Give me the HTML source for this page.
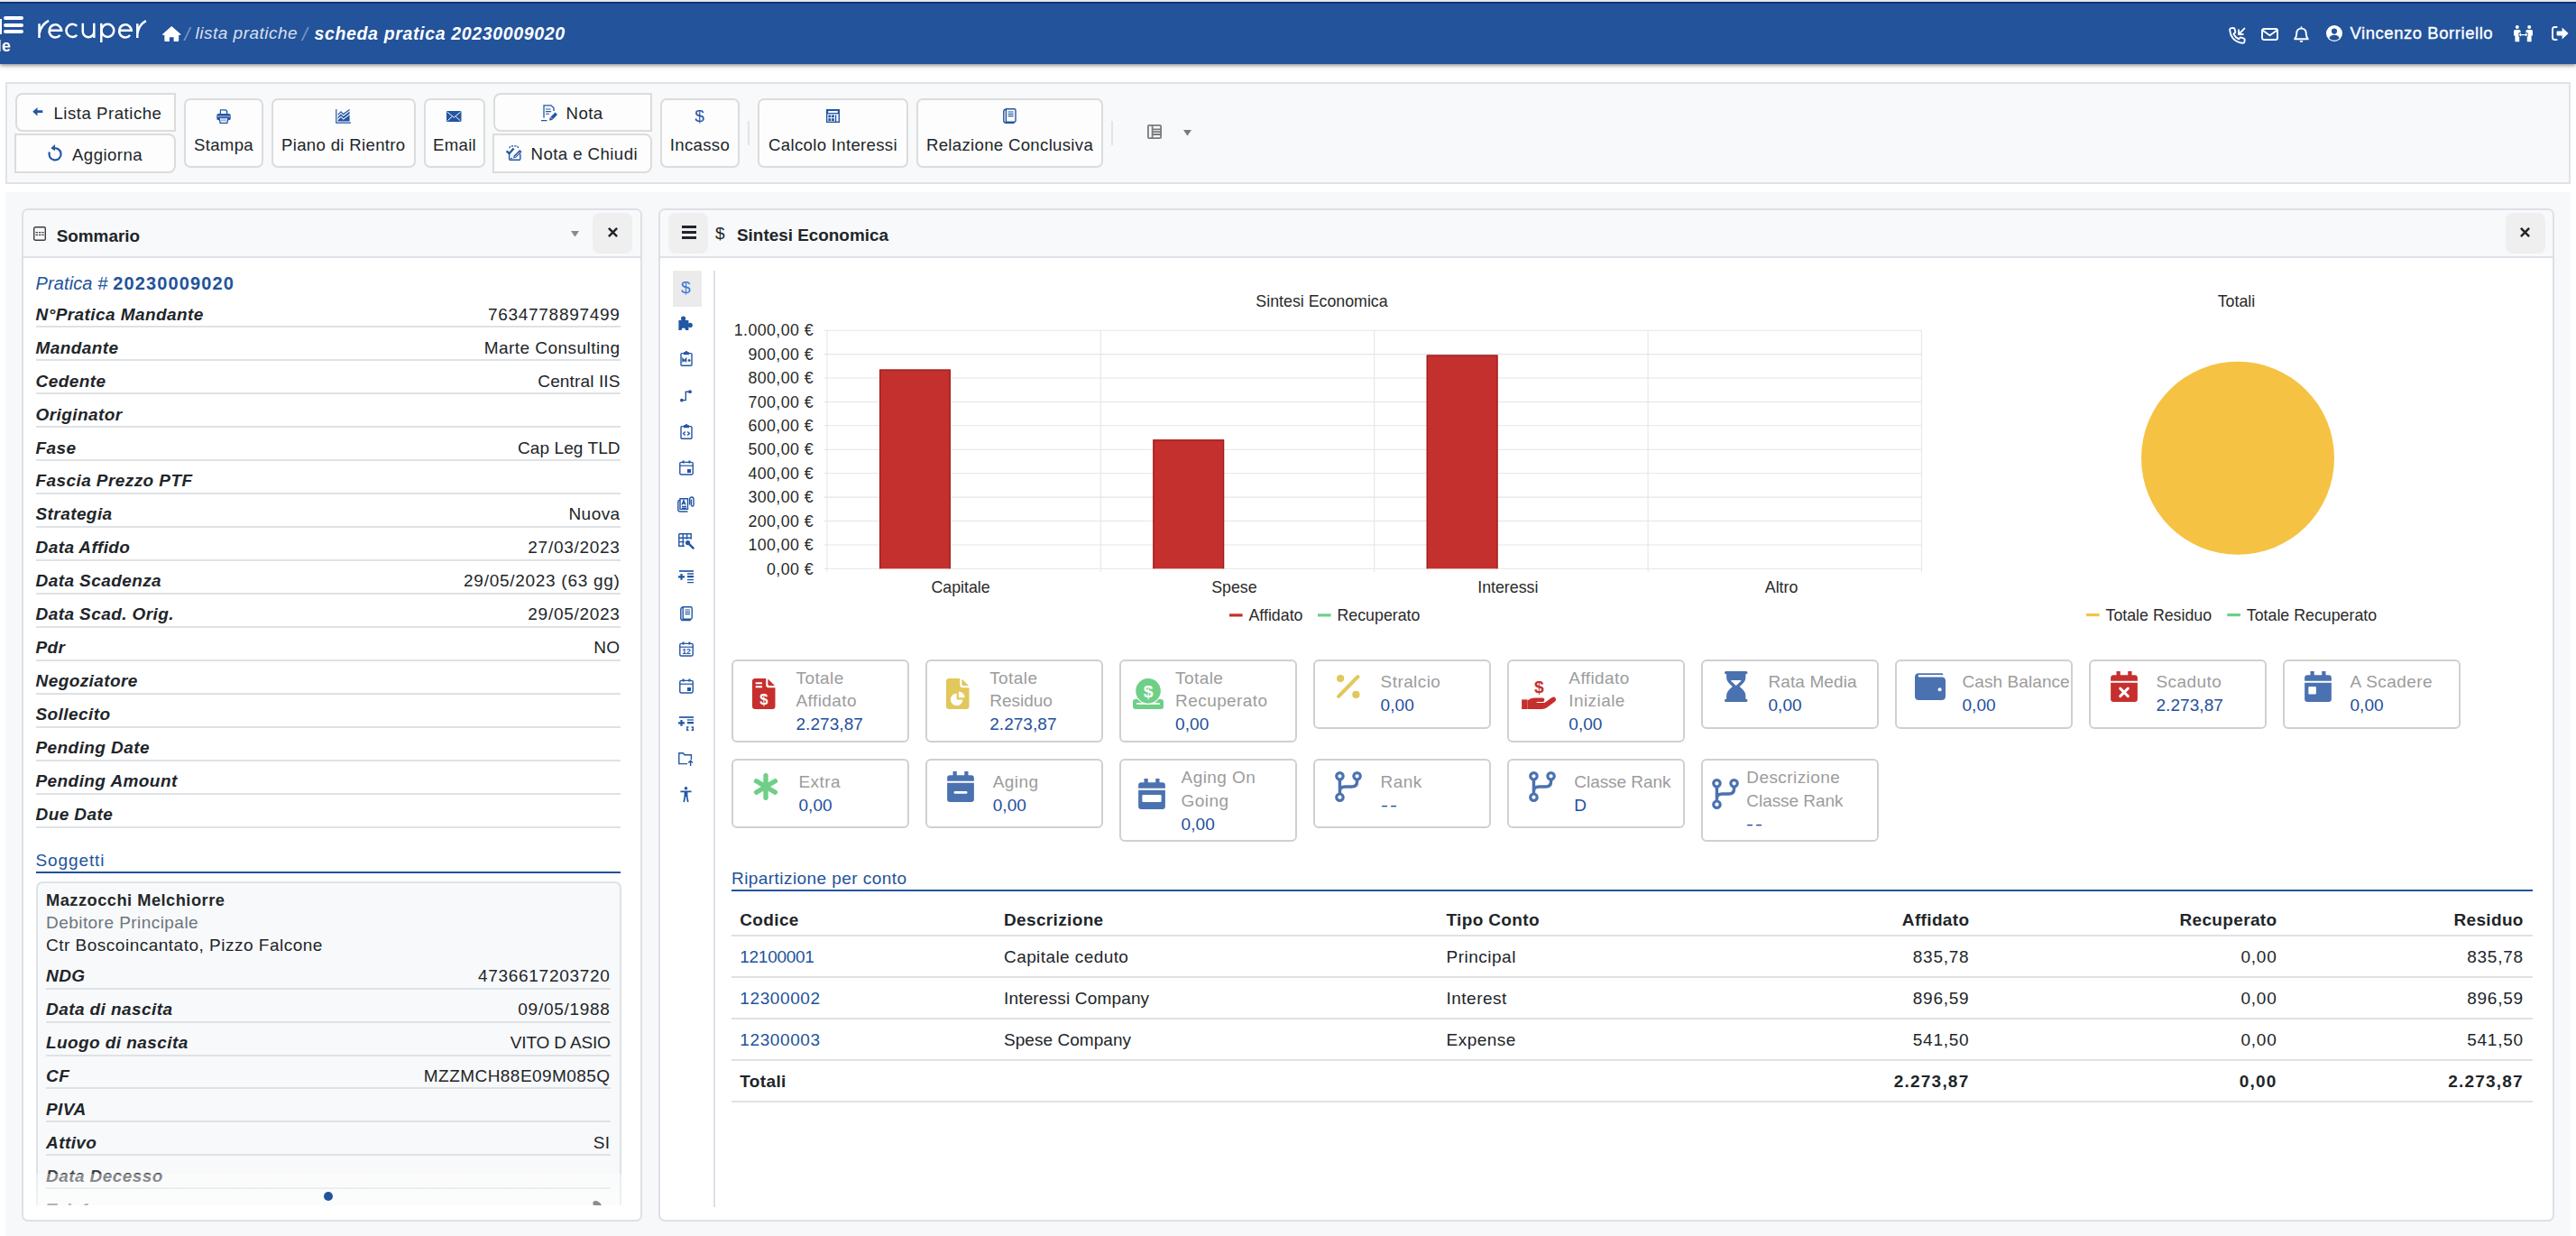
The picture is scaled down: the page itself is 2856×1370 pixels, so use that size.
<!DOCTYPE html>
<html lang="it">
<head>
<meta charset="utf-8">
<title>scheda pratica 20230009020</title>
<style>
*{box-sizing:border-box;margin:0;padding:0}
html,body{width:2856px;height:1370px;overflow:hidden;background:#fff}
body{font-family:"Liberation Sans",sans-serif;font-size:19px;color:#212529;position:relative}
.abs{position:absolute}
svg{display:block;overflow:visible}
/* ---------- top bar ---------- */
#topstrip{position:absolute;left:0;top:0;width:2856px;height:2px;background:#e9e8e6;z-index:5}
#hdr{position:absolute;left:0;top:2px;width:2856px;height:69px;background:#22539b;box-shadow:0 1px 5px rgba(0,0,0,.55);z-index:4}
#hdr:before{content:"";position:absolute;left:0;top:0;width:100%;height:2px;background:linear-gradient(#00246e,#123f8a)}
#hdr .t{position:absolute;color:#fff;white-space:nowrap}
/* ---------- toolbar ---------- */
#tb{position:absolute;left:6px;top:91px;width:2844px;height:113px;background:#f8f9fa;border:2px solid #dfe2e7}
.btn{position:absolute;background:#fdfdfd;border:2px solid #dcdcdc;border-radius:7px;white-space:nowrap;font-size:18.6px;letter-spacing:.32px;color:#212529}
.btn .l{position:absolute;left:0;width:100%;text-align:center}
.sep{position:absolute;width:2px;background:#e2e4e8}
/* ---------- page bg ---------- */
#pg{position:absolute;left:6px;top:213px;width:2844px;height:1157px;background:#f7f8fa}
.panel{position:absolute;background:#fff;border:2px solid #dde0e6;border-radius:7px;overflow:hidden}
.phead{position:absolute;left:0;top:0;right:0;height:53px;background:#f8f9fa;border-bottom:2px solid #dde0e6}
.ptitle{position:absolute;font-weight:bold;font-size:18.9px;letter-spacing:0px;white-space:nowrap;color:#212529}
.sqbtn{position:absolute;width:44px;height:45px;background:#efefef;border-radius:8px}

/* ---------- sommario ---------- */
.row{position:absolute;left:39.5px;width:648.5px;height:2px;background:#dee2e6}
.lb{position:absolute;left:39.5px;font-weight:bold;font-style:italic;font-size:19px;letter-spacing:.42px;white-space:nowrap;line-height:22px}
.vl{position:absolute;right:2168.4px;font-size:19px;letter-spacing:.45px;white-space:nowrap;line-height:22px;text-align:right}
.vl.n{letter-spacing:.72px}
.stitle{position:absolute;color:#22539b;font-size:19px;letter-spacing:.55px;white-space:nowrap;line-height:22px}
.sline{position:absolute;height:2px;background:#22539b}
#subj{position:absolute;left:40px;top:977px;width:648.5px;height:359px;background:#f8f9fa;border:2px solid #dee2e6;border-bottom:0;border-radius:7px 7px 0 0;overflow:hidden}
#subj .row{left:9px;width:626px}
#subj .lb{left:9px}
#subj .vl{right:9.9px}

/* ---------- cards ---------- */
.card{position:absolute;width:197px;background:#fff;border:2px solid #d0d0d0;border-radius:6px}
.card .t{position:absolute;font-size:19px;letter-spacing:.42px;line-height:25.8px;white-space:nowrap;color:#9c9c9c}
.card .t b{font-weight:normal;color:#1f4fa0;letter-spacing:.05px;position:relative;top:.3px}
.card svg{position:absolute}
.card.r2 .t{margin-top:.55px}
.card.r2 svg{margin-top:.5px}

/* ---------- table ---------- */
.tr{position:absolute;left:811px;width:1997px;height:2px;background:#dee2e6}
.td{position:absolute;font-size:19px;letter-spacing:.5px;line-height:22px;white-space:nowrap}
.td.r{text-align:right;letter-spacing:.75px}
.td.h{font-weight:bold;letter-spacing:.35px}
.td.r.h{letter-spacing:.35px}
.td.a{color:#22539b;letter-spacing:.85px}
</style>
</head>
<body>
<div id="topstrip"></div>
<div id="hdr">
<!-- hamburger + clipped items -->
<div class="abs" style="left:0;top:19px;width:2px;height:17px;background:#fff"></div>
<div class="abs" style="left:4px;top:16px;width:22px;height:4px;border-radius:2px;background:#fff"></div>
<div class="abs" style="left:4px;top:23.6px;width:22px;height:4.3px;border-radius:2px;background:#fff"></div>
<div class="abs" style="left:4px;top:31px;width:22px;height:4.3px;border-radius:2px;background:#fff"></div>
<div class="t" style="left:-3.2px;top:39px;font-size:17.5px;font-weight:bold;line-height:20px;letter-spacing:.4px">le</div>
<!-- logo -->
<svg class="abs" style="left:0;top:-2px" width="180" height="60" viewBox="0 0 180 60" fill="none" stroke="#fff" stroke-width="2.5">
<path d="M43.5 26.2V41.9M43.6 37Q45.5 27.5 54 22.9"/>
<path d="M54.6 33.8H68.2A6.85 7.1 0 1 0 66.6 39"/>
<path d="M85.3 28.9A6.9 7.1 0 1 0 85.3 38.8"/>
<path d="M91.8 25.8V35A6.25 6.2 0 0 0 104.3 35V25.8M104.3 25.8V41.9"/>
<path d="M112.3 25.8V47"/><ellipse cx="119.4" cy="33.8" rx="6.9" ry="7.1"/>
<path d="M132.2 33.8H145.8A6.85 7.1 0 1 0 144.2 39"/>
<path d="M152.3 26.2V41.9M152.4 37Q154 27.5 161.8 23.1"/>
</svg>
<!-- breadcrumb -->
<svg class="abs" style="left:180px;top:25.6px" width="20.5" height="19" viewBox="0 0 576 512"><path fill="#fff" d="M288 14 L8 262 Q-4 276 8 290 Q14 296 24 296 H66 V470 Q66 494 90 494 H222 V372 Q222 360 234 360 H342 Q354 360 354 372 V494 H486 Q510 494 510 470 V296 H552 Q562 296 568 290 Q580 276 568 262 Z"/></svg>
<div class="t" style="left:204.5px;top:23.5px;font-size:21px;font-style:italic;color:rgba(255,255,255,.42)">/</div>
<div class="t" style="left:216.5px;top:24.3px;font-size:19px;font-style:italic;letter-spacing:.5px;color:rgba(255,255,255,.84)">lista pratiche</div>
<div class="t" style="left:335px;top:23.5px;font-size:21px;font-style:italic;color:rgba(255,255,255,.42)">/</div>
<div class="t" style="left:348.5px;top:24.3px;font-size:19.5px;font-style:italic;font-weight:bold;letter-spacing:.65px">scheda pratica 20230009020</div>
<!-- right icons -->
<svg class="abs" style="left:2470.5px;top:27.5px" width="19" height="19" viewBox="0 0 19 19"><path fill="none" stroke="#fff" stroke-width="1.9" stroke-linecap="round" stroke-linejoin="round" d="M1.2 3.6Q1 1.2 3.2 1.1L5.2 1Q6.2 1 6.5 2L7.3 5Q7.5 6 6.7 6.6L5.4 7.6Q7.2 11.6 11.2 13.4L12.3 12Q12.9 11.3 13.9 11.6L16.8 12.6Q17.8 13 17.7 14L17.5 16Q17.3 17.9 15.2 17.7Q8.6 17 4.6 12.4Q1.6 8.6 1.2 3.6Z"/><path fill="none" stroke="#fff" stroke-width="1.9" stroke-linecap="round" stroke-linejoin="round" stroke-width="1.8" d="M17.4 1.6L11 8M11 3.2V8H15.8"/></svg>
<svg class="abs" style="left:2506.5px;top:29.4px" width="19" height="14" viewBox="0 0 19 14"><rect x="1" y="1" width="17" height="12" rx="2" fill="none" stroke="#fff" stroke-width="1.9" stroke-linecap="round" stroke-linejoin="round"/><path fill="none" stroke="#fff" stroke-width="1.9" stroke-linecap="round" stroke-linejoin="round" d="M1.4 2.4L9.5 8.2L17.6 2.4"/></svg>
<svg class="abs" style="left:2542.5px;top:27px" width="17" height="19" viewBox="0 0 17 19"><path fill="none" stroke="#fff" stroke-width="1.9" stroke-linecap="round" stroke-linejoin="round" d="M8.5 1.2V2.4M1.2 14.2Q3.2 12 3.2 8.4Q3.2 2.6 8.5 2.6Q13.8 2.6 13.8 8.4Q13.8 12 15.8 14.2Z"/><path fill="#fff" d="M6.6 16h3.8a1.9 1.9 0 0 1-3.8 0z"/></svg>
<svg class="abs" style="left:2578.6px;top:26.3px" width="18" height="18" viewBox="0 0 18 18"><circle cx="9" cy="9" r="9" fill="#fff"/><circle cx="9" cy="6.6" r="3.1" fill="#22539b"/><path fill="#22539b" d="M3.4 14.4Q4.4 10.8 9 10.8Q13.6 10.8 14.6 14.4Q12.4 16.8 9 16.8Q5.6 16.8 3.4 14.4Z"/></svg>
<svg class="abs" style="left:2787px;top:26.3px" width="21" height="18.2" viewBox="0 0 21 18.2"><circle cx="3.8" cy="2" r="2" fill="#fff"/><circle cx="17.2" cy="2" r="2" fill="#fff"/><path fill="#fff" d="M1.6 5h4.4q1.6 0 1.6 1.6v5H6.2v6.6H1.4v-6.6H0v-5Q0 5 1.6 5zM15 5h4.4q1.6 0 1.6 1.6v5h-1.4v6.6h-4.8v-6.6h-1.4v-5Q13.4 5 15 5z"/><path fill="#22539b" d="M5.4 8.2h10.2v4.4H5.4z"/><path fill="#fff" d="M8 8.6v1.3h5V8.6l2.4 2-2.4 2v-1.3H8v1.3l-2.4-2z"/></svg>
<svg class="abs" style="left:2829.4px;top:27.2px" width="19" height="16" viewBox="0 0 19 16"><path fill="none" stroke="#fff" stroke-width="1.9" stroke-linecap="round" stroke-linejoin="round" stroke-width="2" d="M5.6 1H3.4Q1 1 1 3.4v9.2Q1 15 3.4 15h2.2"/><path fill="#fff" d="M11.6 1.6L18.6 8l-7 6.4v-3.8H6.4Q5.6 10.6 5.6 9.8V6.2Q5.6 5.4 6.4 5.4h5.2z"/></svg>
<div class="t" id="uname" style="left:2605.5px;top:24.3px;font-size:18.5px;letter-spacing:.55px;-webkit-text-stroke:.35px #fff">Vincenzo Borriello</div>
</div>
<div id="tb"></div>
<!-- toolbar buttons -->
<div class="btn" style="left:17px;top:103px;width:178px;height:42.5px;border-radius:8px 0 0 8px;letter-spacing:.52px"><div class="abs" style="left:17px;top:13.7px"><svg width="11.5" height="9.4" viewBox="0 0 13 11"><path fill="#2356a3" d="M6.2 0v3.9H13v3.2H6.2V11L0 5.5z"/></svg></div><div class="abs" style="left:40.5px;top:1.5px;line-height:38px">Lista Pratiche</div></div>
<div class="btn" style="left:16px;top:148px;width:178.5px;height:43.5px;border-radius:0 8px 8px 0;letter-spacing:.45px"><div class="abs" style="left:35px;top:10px"><svg width="16.5" height="18.3" viewBox="0 0 18 20"><path fill="none" stroke="#2356a3" stroke-width="2.4" d="M6.3 5.1A7.2 7.2 0 1 1 2 9.3"/><path fill="#2356a3" d="M8.8 0v8L3.6 4.6z"/></svg></div><div class="abs" style="left:62px;top:1.6px;line-height:39px">Aggiorna</div></div>
<div class="btn" style="left:204.0px;top:109px;width:88.0px;height:77px"><div class="abs" style="left:33.5px;top:9.5px"><svg width="16" height="16" viewBox="0 0 16 16"><path fill="#2356a3" d="M4 0.3h6.6l1.7 1.7v3H3.7z"/><path fill="#fdfdfd" d="M5 1.5h5l1 1V5H5z"/><rect x="0.3" y="5" width="15.4" height="7.2" rx="2" fill="#2356a3"/><rect x="1.2" y="7.6" width="13.6" height="0.9" fill="#fdfdfd" opacity=".9"/><path fill="#fdfdfd" stroke="#2356a3" stroke-width="1.3" d="M3.2 9.3h9.6l-.9 6H4.1z"/><path stroke="#2356a3" stroke-width=".9" opacity=".6" d="M5 11h6M5 12.7h6"/></svg></div><div class="l" style="top:38px;line-height:24px">Stampa</div></div>
<div class="btn" style="left:301.0px;top:109px;width:159.5px;height:77px"><div class="abs" style="left:68.8px;top:9.5px"><svg width="17" height="16" viewBox="0 0 17 16"><path fill="none" stroke="#2356a3" stroke-width="1.2" d="M0.8 0v15.2H17"/><path fill="#2356a3" d="M2.6 13.6V8.8l3.4-3.6 2.6 2.8 7-5.4v11z"/><path fill="none" stroke="#fdfdfd" stroke-width="1.1" d="M2.6 8.9l3.4-3.3 2.7 2.9L16 2.8" transform="translate(0,2.6)"/><path fill="none" stroke="#2356a3" stroke-width="1.2" d="M2.6 6.4l3.4-3.5 2.6 2.7 7-5"/></svg></div><div class="l" style="top:38px;line-height:24px">Piano di Rientro</div></div>
<div class="btn" style="left:470.0px;top:109px;width:68.0px;height:77px"><div class="abs" style="left:23.2px;top:11.5px"><svg width="16.5" height="12" viewBox="0 0 16.5 12"><rect width="16.5" height="12" rx="1.3" fill="#2356a3"/><path fill="none" stroke="#fdfdfd" stroke-width="1" d="M1 1.2l7.25 6 7.25-6M1.2 10.8l5-4.6M15.3 10.8l-5-4.6"/></svg></div><div class="l" style="top:38px;line-height:24px">Email</div></div>
<div class="btn" style="left:547px;top:103px;width:176px;height:42.5px;border-radius:8px 0 0 8px;letter-spacing:.45px"><div class="abs" style="left:51px;top:10.5px"><svg width="18" height="19" viewBox="0 0 18 19"><path fill="none" stroke="#2356a3" stroke-width="1.3" d="M3 14.5V.8h8l3 3V7"/><path fill="none" stroke="#2356a3" stroke-width="1.1" d="M5 5h5.5M5 7.6h6M5 10.2h4M0 17.6h6.5"/><path fill="#2356a3" d="M9 17.6l.7-3.2 5.8-5.8 2.5 2.5-5.8 5.8z"/><path stroke="#fdfdfd" stroke-width=".8" d="M10.6 14.2l1.9 1.9"/></svg></div><div class="abs" style="left:78.5px;top:1.6px;line-height:38.5px">Nota</div></div>
<div class="btn" style="left:546px;top:148px;width:177px;height:44px;border-radius:0 8px 8px 0;letter-spacing:.45px"><div class="abs" style="left:13px;top:11px"><svg width="18.5" height="17" viewBox="0 0 18.5 17"><path fill="none" stroke="#2356a3" stroke-width="1.3" stroke-dasharray="2.2 1.1" d="M4 3.2Q4 .8 6.4 .8H11Q13.4 .8 13.6 3"/><path fill="none" stroke="#2356a3" stroke-width="1.4" d="M3.6 9.6v5.6q0 1 1 1H14.8q1 0 1-1V9.4"/><path fill="none" stroke="#2356a3" stroke-width="2.3" d="M.6 6.4l3 2.8L8.6 3.6"/><path fill="#2356a3" d="M8 14.4l.7-2.9 6.6-6.6 2.3 2.3-6.6 6.6z"/><path stroke="#fdfdfd" stroke-width=".9" d="M9.6 13.2l5.6-5.6"/><path fill="none" stroke="#2356a3" stroke-width="1" d="M5 14.6h2"/></svg></div><div class="abs" style="left:40.5px;top:1.3px;line-height:40px">Nota e Chiudi</div></div>
<div class="btn" style="left:732.0px;top:109px;width:88.0px;height:77px"><div class="abs" style="left:36.2px;top:8.5px"><div style="font-size:19px;line-height:18px;color:#2356a3;font-weight:normal">$</div></div><div class="l" style="top:38px;line-height:24px">Incasso</div></div>
<div class="sep" style="left:829px;top:134px;height:27px"></div>
<div class="btn" style="left:840.0px;top:109px;width:167.0px;height:77px"><div class="abs" style="left:73.5px;top:10.0px"><svg width="15" height="15" viewBox="0 0 15 15"><rect x=".7" y=".7" width="13.6" height="13.6" fill="none" stroke="#2356a3" stroke-width="1.4"/><rect x=".7" y=".7" width="13.6" height="4.6" fill="#2356a3"/><rect x="2.2" y="2" width="10.6" height="2" fill="#fdfdfd"/><path fill="#2356a3" d="M2.4 6.6h2.8v2.6H2.4zM6.1 6.6h2.8v2.6H6.1zM2.4 10.2h2.8v2.8H2.4zM6.1 10.2h2.8v2.8H6.1z"/><path fill="none" stroke="#2356a3" stroke-width="1.3" d="M10.6 6.4v7.6"/></svg></div><div class="l" style="top:38px;line-height:24px">Calcolo Interessi</div></div>
<div class="btn" style="left:1016.0px;top:109px;width:207.0px;height:77px"><div class="abs" style="left:93.5px;top:9.0px"><svg width="15" height="17" viewBox="0 0 15 17"><path fill="none" stroke="#2356a3" stroke-width="1.4" d="M3.4.8h9.2q1.4 0 1.4 1.4v11.6q0 1.4-1.4 1.4H3.4z"/><path fill="none" stroke="#2356a3" stroke-width="1.4" d="M3.4 1.2Q.8 1.2.8 3.4v10.4q0 2.4 2.6 2.4h9.2"/><path stroke="#2356a3" stroke-width="1.2" d="M5.6 4h6M5.6 6.3h6M5.6 8.6h6"/></svg></div><div class="l" style="top:38px;line-height:24px">Relazione Conclusiva</div></div>
<div class="sep" style="left:1232px;top:134px;height:27px"></div>
<svg class="abs" style="left:1272px;top:138px" width="16" height="16" viewBox="0 0 16 16"><rect x=".9" y=".9" width="14.2" height="14.2" rx="1.2" fill="none" stroke="#7b7b7b" stroke-width="1.8"/><path stroke="#7b7b7b" stroke-width="1.8" d="M5.6 1v14M5.6 5.4h9.6M5.6 8.2h9.6M5.6 11h9.6" fill="none"/></svg>
<svg class="abs" style="left:1312px;top:144px" width="9" height="6.5" viewBox="0 0 9 6.5"><path fill="#7b7b7b" d="M0 0h9L4.5 6.5z"/></svg>
<div id="pg"></div>
<div class="panel" id="p1" style="left:24px;top:231px;width:688px;height:1123px"><div class="phead"></div></div>
<div class="panel" id="p2" style="left:730px;top:231px;width:2102px;height:1123px"><div class="phead"></div></div>
<!-- sommario content -->
<svg class="abs" style="left:37px;top:251px" width="14" height="16" viewBox="0 0 14 16"><rect x=".7" y=".7" width="12.6" height="14.6" rx="1.6" fill="none" stroke="#3a3d41" stroke-width="1.4"/><path stroke="#3a3d41" stroke-width="1.1" stroke-dasharray="2.4 1" d="M2.6 6.6h9M2.6 9.4h9"/></svg>
<div class="ptitle" style="left:62.7px;top:250.6px;line-height:22px">Sommario</div>
<svg class="abs" style="left:632.5px;top:255.5px" width="9" height="6.5" viewBox="0 0 9 6.5"><path fill="#8a8a8a" d="M0 0h9L4.5 6.5z"/></svg>
<div class="sqbtn" style="left:657px;top:236px"></div><svg class="abs" style="left:673.5px;top:252px" width="11" height="11" viewBox="0 0 11 11"><path stroke="#212529" stroke-width="2.5" d="M.9.9l9.2 9.2M10.1.9L.9 10.1"/></svg>
<div class="abs" style="left:39.5px;top:301.5px;font-size:20px;letter-spacing:.12px;color:#22539b;font-style:italic;white-space:nowrap;line-height:24px">Pratica # <b style="letter-spacing:1.13px;font-style:normal">20230009020</b></div>
<div class="lb" style="top:337.7px">N°Pratica Mandante</div>
<div class="vl n" style="top:337.7px">7634778897499</div>
<div class="row" style="top:361.3px"></div>
<div class="lb" style="top:374.6px">Mandante</div>
<div class="vl" style="top:374.6px">Marte Consulting</div>
<div class="row" style="top:398.2px"></div>
<div class="lb" style="top:411.6px">Cedente</div>
<div class="vl" style="top:411.6px;letter-spacing:0.14px">Central IIS</div>
<div class="row" style="top:435.2px"></div>
<div class="lb" style="top:448.6px">Originator</div>
<div class="row" style="top:472.2px"></div>
<div class="lb" style="top:485.5px">Fase</div>
<div class="vl" style="top:485.5px;letter-spacing:0.08px">Cap Leg TLD</div>
<div class="row" style="top:509.1px"></div>
<div class="lb" style="top:522.4px">Fascia Prezzo PTF</div>
<div class="row" style="top:546.0px"></div>
<div class="lb" style="top:559.4px">Strategia</div>
<div class="vl" style="top:559.4px">Nuova</div>
<div class="row" style="top:583.0px"></div>
<div class="lb" style="top:596.4px">Data Affido</div>
<div class="vl n" style="top:596.4px">27/03/2023</div>
<div class="row" style="top:620.0px"></div>
<div class="lb" style="top:633.3px">Data Scadenza</div>
<div class="vl n" style="top:633.3px">29/05/2023 (63 gg)</div>
<div class="row" style="top:656.9px"></div>
<div class="lb" style="top:670.2px">Data Scad. Orig.</div>
<div class="vl n" style="top:670.2px">29/05/2023</div>
<div class="row" style="top:693.9px"></div>
<div class="lb" style="top:707.2px">Pdr</div>
<div class="vl" style="top:707.2px">NO</div>
<div class="row" style="top:730.8px"></div>
<div class="lb" style="top:744.1px">Negoziatore</div>
<div class="row" style="top:767.8px"></div>
<div class="lb" style="top:781.1px">Sollecito</div>
<div class="row" style="top:804.7px"></div>
<div class="lb" style="top:818.1px">Pending Date</div>
<div class="row" style="top:841.7px"></div>
<div class="lb" style="top:855.0px">Pending Amount</div>
<div class="row" style="top:878.6px"></div>
<div class="lb" style="top:891.9px">Due Date</div>
<div class="row" style="top:915.5px"></div>
<div class="stitle" style="left:39.5px;top:942.6px;letter-spacing:.9px">Soggetti</div><div class="sline" style="left:39.5px;top:965.5px;width:648.5px"></div>
<div id="subj">
<div class="abs" style="left:9px;top:8.3px;font-size:18.3px;font-weight:bold;letter-spacing:.47px;line-height:22px;white-space:nowrap;color:#24282c">Mazzocchi Melchiorre</div>
<div class="abs" style="left:9px;top:33px;font-size:19px;letter-spacing:.45px;line-height:22px;white-space:nowrap;color:#6c757d">Debitore Principale</div>
<div class="abs" style="left:9px;top:58px;font-size:19px;letter-spacing:.5px;line-height:22px;white-space:nowrap">Ctr Boscoincantato, Pizzo Falcone</div>
<div class="lb" style="top:92.0px">NDG</div>
<div class="vl n" style="top:92.0px">4736617203720</div>
<div class="row" style="top:115.6px"></div>
<div class="lb" style="top:128.9px">Data di nascita</div>
<div class="vl n" style="top:128.9px">09/05/1988</div>
<div class="row" style="top:152.5px"></div>
<div class="lb" style="top:165.9px">Luogo di nascita</div>
<div class="vl" style="top:165.9px;letter-spacing:-.17px">VITO D ASIO</div>
<div class="row" style="top:189.5px"></div>
<div class="lb" style="top:202.8px">CF</div>
<div class="vl" style="top:202.8px">MZZMCH88E09M085Q</div>
<div class="row" style="top:226.4px"></div>
<div class="lb" style="top:239.8px">PIVA</div>
<div class="row" style="top:263.4px"></div>
<div class="lb" style="top:276.7px">Attivo</div>
<div class="vl" style="top:276.7px">SI</div>
<div class="row" style="top:300.3px"></div>
<div class="lb" style="top:313.7px;color:#3c4044">Data Decesso</div>
<div class="row" style="top:337.3px"></div>
<div class="lb" style="top:350.6px;color:#62666a">Telefono</div>
<div class="row" style="top:374.2px"></div>
</div>
<div class="abs" style="left:26px;top:1300.5px;width:684px;height:35.5px;background:linear-gradient(rgba(255,255,255,.36),rgba(255,255,255,.5))"></div><div class="abs" style="left:657px;top:1330.5px;width:9px;height:5px;background:#8d8d8d;border-radius:4px 5px 0 0;transform:skewX(20deg)"></div>
<div class="abs" style="left:26px;top:1335.5px;width:684px;height:16.5px;background:#fff;border-radius:0 0 5px 5px"></div>
<div class="abs" style="left:359px;top:1321px;width:10px;height:10px;border-radius:5px;background:#22539b"></div>
<!-- panel2 header + sidebar -->
<div class="sqbtn" style="left:741px;top:236px"></div>
<div class="abs" style="left:755.5px;top:250px;width:16px;height:3.2px;background:#212529"></div><div class="abs" style="left:755.5px;top:256px;width:16px;height:3.2px;background:#212529"></div><div class="abs" style="left:755.5px;top:261.7px;width:16px;height:3.2px;background:#212529"></div>
<div class="abs" style="left:793px;top:248px;font-size:19px;line-height:22px;color:#212529">$</div>
<div class="ptitle" style="left:817px;top:250px;line-height:22px">Sintesi Economica</div>
<div class="sqbtn" style="left:2777.5px;top:236px"></div><svg class="abs" style="left:2794px;top:252px" width="11" height="11" viewBox="0 0 11 11"><path stroke="#212529" stroke-width="2.5" d="M.9.9l9.2 9.2M10.1.9L.9 10.1"/></svg>
<div class="abs" style="left:746px;top:300px;width:32px;height:40px;background:#ebebeb"></div>
<div class="abs" style="left:791px;top:300px;width:2px;height:1038px;background:#dde0e6"></div>
<div class="abs" style="left:755px;top:307.5px;font-size:19px;line-height:22px;color:#3b78d8">$</div>
<svg class="abs" style="left:752px;top:350px" width="16" height="16" viewBox="0 0 16 16"><path fill="#2356a3" d="M.4 5h11v11H.4z"/><circle cx="5.6" cy="3" r="2.6" fill="#2356a3"/><circle cx="13.2" cy="10.4" r="2.6" fill="#2356a3"/><circle cx="5.8" cy="15.6" r="2.2" fill="#fff"/></svg>
<svg class="abs" style="left:753.5px;top:389px" width="14" height="17" viewBox="0 0 14 17"><rect x="1" y="2.6" width="12" height="13.6" rx="1" fill="none" stroke="#2356a3" stroke-width="1.4"/><path fill="#2356a3" d="M4 1.2h6v3H4z"/><circle cx="7" cy="1.4" r="1.3" fill="#2356a3"/><path fill="none" stroke="#2356a3" stroke-width="1.4" stroke-width="1.1" d="M3 12.4V8.6l1.8 2.4 1.8-2.4v3.8M8.6 10.5h3M10.1 9v3"/></svg>
<svg class="abs" style="left:753.5px;top:432px" width="13" height="14" viewBox="0 0 13 14"><path fill="none" stroke="#2356a3" stroke-width="1.4" stroke-width="1.5" d="M2 11.6h4.3V2.2h4.3"/><circle cx="1.9" cy="11.6" r="1.9" fill="#2356a3"/><circle cx="11" cy="2.2" r="1.9" fill="#2356a3"/></svg>
<svg class="abs" style="left:753.5px;top:470px" width="14" height="17" viewBox="0 0 14 17"><rect x="1" y="2.6" width="12" height="13.6" rx="1" fill="none" stroke="#2356a3" stroke-width="1.4"/><path fill="#2356a3" d="M4 1.2h6v3H4z"/><circle cx="7" cy="1.4" r="1.3" fill="#2356a3"/><path fill="none" stroke="#2356a3" stroke-width="1.4" stroke-width="1.1" d="M5.8 8.6L3.6 10.6l2.2 2M8.2 8.6l2.2 2-2.2 2"/></svg>
<svg class="abs" style="left:752.5px;top:510px" width="16" height="17" viewBox="0 0 16 17"><rect x=".8" y="2.4" width="14.4" height="13.6" rx="1.4" fill="none" stroke="#2356a3" stroke-width="1.4"/><path stroke="#2356a3" stroke-width="1.2" d="M.8 6.2h14.4"/><path stroke="#2356a3" stroke-width="2" d="M4.6 .4v3M11.4 .4v3"/><rect x="9" y="10" width="4" height="4" fill="#2356a3"/></svg>
<svg class="abs" style="left:751px;top:550px" width="19" height="18" viewBox="0 0 19 18"><path fill="none" stroke="#2356a3" stroke-width="1.4" d="M3 2.8h8.5v11.6H3z"/><path fill="none" stroke="#2356a3" stroke-width="1.4" d="M3 4.4Q.8 4.6.8 6.6v8.2q0 2.2 2.4 2.2h8.3"/><path fill="none" stroke="#2356a3" stroke-width="1.4" stroke-width="1.1" d="M5 9.6l2-5 2 5M5.8 8h2.6M5 11.4h5M5 13.2h5"/><path fill="none" stroke="#2356a3" stroke-width="1.4" stroke-width="1.2" d="M13.6 9.4V3.2a2.2 2.2 0 0 1 4.4 0v6.6a1.3 1.3 0 0 1-2.6 0V3.6"/></svg>
<svg class="abs" style="left:751.5px;top:591px" width="18" height="18" viewBox="0 0 18 18"><path fill="none" stroke="#2356a3" stroke-width="1.4" stroke-width="1.3" d="M.8.8h13.4v6M.8.8v13.4h6M.8 5.2h13.4M.8 9.6h6M5.2.8v13.4M9.6.8v6"/><circle cx="10.6" cy="10.6" r="2.6" fill="#2356a3"/><path stroke="#2356a3" stroke-width="2.4" stroke-linecap="round" d="M12.6 12.6l4 4"/></svg>
<svg class="abs" style="left:752px;top:632px" width="17" height="15" viewBox="0 0 17 15"><path stroke="#2356a3" stroke-width="1.7" d="M1 1h16" fill="none" stroke-width="1.2"/><path stroke="#2356a3" stroke-width="2.2" d="M0 7.4h7M3.5 4v6.8M10 7.2h7" fill="none"/><path stroke="#2356a3" stroke-width="1.3" d="M10 4h7M10 10.6h7M10 13.6h7" fill="none"/></svg>
<svg class="abs" style="left:753.5px;top:672px" width="14" height="16.5" viewBox="0 0 14 16.5"><path fill="none" stroke="#2356a3" stroke-width="1.4" d="M3.2.8h8.6q1.4 0 1.4 1.4v10.6q0 1.4-1.4 1.4H3.2z"/><path fill="none" stroke="#2356a3" stroke-width="1.4" d="M3.2 1.2Q.8 1.2.8 3.4v9.8q0 2.4 2.6 2.4h8.4"/><path stroke="#2356a3" stroke-width="1.2" d="M5.4 4h5.6M5.4 6.3h5.6M5.4 8.6h5.6"/></svg>
<svg class="abs" style="left:752.5px;top:711px" width="16" height="17" viewBox="0 0 16 17"><rect x=".8" y="2.4" width="14.4" height="13.6" rx="1.4" fill="none" stroke="#2356a3" stroke-width="1.4"/><path stroke="#2356a3" stroke-width="1.2" d="M.8 6.2h14.4"/><path stroke="#2356a3" stroke-width="2" d="M4.6 .4v3M11.4 .4v3"/><text x="8" y="14.4" font-size="8.6" font-weight="bold" text-anchor="middle" fill="#2356a3" font-family="Liberation Sans">12</text></svg>
<svg class="abs" style="left:752.5px;top:752px" width="16" height="17" viewBox="0 0 16 17"><rect x=".8" y="2.4" width="14.4" height="13.6" rx="1.4" fill="none" stroke="#2356a3" stroke-width="1.4"/><path stroke="#2356a3" stroke-width="1.2" d="M.8 6.2h14.4"/><path stroke="#2356a3" stroke-width="2" d="M4.6 .4v3M11.4 .4v3"/><rect x="9" y="10" width="4" height="4" fill="#2356a3"/></svg>
<svg class="abs" style="left:752px;top:794px" width="17" height="15.5" viewBox="0 0 17 15.5"><path stroke="#2356a3" stroke-width="1.7" d="M1 1h16" fill="none" stroke-width="1.2"/><path stroke="#2356a3" stroke-width="2.2" d="M0 7.4h7M3.5 4v6.8M10 7.2h7" fill="none"/><path stroke="#2356a3" stroke-width="1.3" d="M10 4h7" fill="none"/><path fill="none" stroke="#2356a3" stroke-width="1.4" stroke-width="1.3" d="M11.5 12H9.8v3.2h1.7M14.6 12h1.7v3.2h-1.7"/></svg>
<svg class="abs" style="left:752px;top:834px" width="17" height="15" viewBox="0 0 17 15"><path fill="none" stroke="#2356a3" stroke-width="1.4" d="M10 12.6H.8V.8h4.6l1.6 2h7.4v5.4"/><path fill="none" stroke="#2356a3" stroke-width="1.4" stroke-width="1.5" d="M13.6 15V9.4M11.2 11.6l2.4-2.4 2.4 2.4"/></svg>
<svg class="abs" style="left:754px;top:872px" width="13" height="17" viewBox="0 0 13 17"><circle cx="6.5" cy="1.8" r="1.8" fill="#2356a3"/><path fill="none" stroke="#2356a3" stroke-width="1.7" d="M.4 5.4h12.2M6.5 5.4v5M4.2 17l1.4-7h1.8l1.4 7"/><path fill="#2356a3" d="M4.6 5.4h3.8v5.6H4.6z"/></svg>
<!-- charts -->
<svg class="abs" style="left:800px;top:290px" width="2020" height="420" viewBox="0 0 2020 420"><path d="M113.4 340.3H1330.4" stroke="#e5e5e5" stroke-width="1.05"/><path d="M113.4 313.9H1330.4" stroke="#e5e5e5" stroke-width="1.05"/><path d="M113.4 287.5H1330.4" stroke="#e5e5e5" stroke-width="1.05"/><path d="M113.4 261.1H1330.4" stroke="#e5e5e5" stroke-width="1.05"/><path d="M113.4 234.7H1330.4" stroke="#e5e5e5" stroke-width="1.05"/><path d="M113.4 208.2H1330.4" stroke="#e5e5e5" stroke-width="1.05"/><path d="M113.4 181.8H1330.4" stroke="#e5e5e5" stroke-width="1.05"/><path d="M113.4 155.4H1330.4" stroke="#e5e5e5" stroke-width="1.05"/><path d="M113.4 129.0H1330.4" stroke="#e5e5e5" stroke-width="1.05"/><path d="M113.4 102.6H1330.4" stroke="#e5e5e5" stroke-width="1.05"/><path d="M113.4 76.2H1330.4" stroke="#e5e5e5" stroke-width="1.05"/><path d="M117.0 76.2V344.3" stroke="#e5e5e5" stroke-width="1.05"/><path d="M420.3 76.2V344.3" stroke="#e5e5e5" stroke-width="1.05"/><path d="M723.7 76.2V344.3" stroke="#e5e5e5" stroke-width="1.05"/><path d="M1027.1 76.2V344.3" stroke="#e5e5e5" stroke-width="1.05"/><path d="M1330.4 76.2V344.3" stroke="#e5e5e5" stroke-width="1.05"/><text x="102.0" y="346.5" text-anchor="end" letter-spacing=".42" font-family="Liberation Sans, sans-serif" font-size="17.8" fill="#2a2a2a">0,00 €</text><text x="102.0" y="320.1" text-anchor="end" letter-spacing=".42" font-family="Liberation Sans, sans-serif" font-size="17.8" fill="#2a2a2a">100,00 €</text><text x="102.0" y="293.7" text-anchor="end" letter-spacing=".42" font-family="Liberation Sans, sans-serif" font-size="17.8" fill="#2a2a2a">200,00 €</text><text x="102.0" y="267.3" text-anchor="end" letter-spacing=".42" font-family="Liberation Sans, sans-serif" font-size="17.8" fill="#2a2a2a">300,00 €</text><text x="102.0" y="240.9" text-anchor="end" letter-spacing=".42" font-family="Liberation Sans, sans-serif" font-size="17.8" fill="#2a2a2a">400,00 €</text><text x="102.0" y="214.4" text-anchor="end" letter-spacing=".42" font-family="Liberation Sans, sans-serif" font-size="17.8" fill="#2a2a2a">500,00 €</text><text x="102.0" y="188.0" text-anchor="end" letter-spacing=".42" font-family="Liberation Sans, sans-serif" font-size="17.8" fill="#2a2a2a">600,00 €</text><text x="102.0" y="161.6" text-anchor="end" letter-spacing=".42" font-family="Liberation Sans, sans-serif" font-size="17.8" fill="#2a2a2a">700,00 €</text><text x="102.0" y="135.2" text-anchor="end" letter-spacing=".42" font-family="Liberation Sans, sans-serif" font-size="17.8" fill="#2a2a2a">800,00 €</text><text x="102.0" y="108.8" text-anchor="end" letter-spacing=".42" font-family="Liberation Sans, sans-serif" font-size="17.8" fill="#2a2a2a">900,00 €</text><text x="102.0" y="82.4" text-anchor="end" letter-spacing=".42" font-family="Liberation Sans, sans-serif" font-size="17.8" fill="#2a2a2a">1.000,00 €</text><rect x="175.00" y="119.6" width="78.85" height="220.7" fill="#c3302e"/><path d="M175.60 340.3V120.2H253.25V340.3" fill="none" stroke="#9d1d1a" stroke-width="1.2"/><rect x="478.30" y="197.3" width="78.85" height="143.0" fill="#c3302e"/><path d="M478.90 340.3V197.9H556.55V340.3" fill="none" stroke="#9d1d1a" stroke-width="1.2"/><rect x="781.70" y="103.5" width="78.85" height="236.8" fill="#c3302e"/><path d="M782.30 340.3V104.1H859.95V340.3" fill="none" stroke="#9d1d1a" stroke-width="1.2"/><text x="265.1" y="366.8" text-anchor="middle" font-family="Liberation Sans, sans-serif" font-size="17.8" fill="#2a2a2a">Capitale</text><text x="568.4" y="366.8" text-anchor="middle" font-family="Liberation Sans, sans-serif" font-size="17.8" fill="#2a2a2a">Spese</text><text x="871.8" y="366.8" text-anchor="middle" font-family="Liberation Sans, sans-serif" font-size="17.8" fill="#2a2a2a">Interessi</text><text x="1175.1" y="366.8" text-anchor="middle" font-family="Liberation Sans, sans-serif" font-size="17.8" fill="#2a2a2a">Altro</text><text x="665.5" y="49.8" text-anchor="middle" font-family="Liberation Sans, sans-serif" font-size="17.8" fill="#2a2a2a">Sintesi Economica</text><rect x="563.0" y="390.3" width="14.6" height="3.2" fill="#c2302e"/><text x="584.5" y="398.0" font-family="Liberation Sans, sans-serif" font-size="17.8" fill="#2a2a2a">Affidato</text><rect x="661.0" y="390.3" width="14.6" height="3.2" fill="#6fcf87"/><text x="682.5" y="398.0" font-family="Liberation Sans, sans-serif" font-size="17.8" fill="#2a2a2a">Recuperato</text><circle cx="1681.0" cy="217.8" r="107" fill="#f5c243"/><text x="1679.5" y="49.8" text-anchor="middle" font-family="Liberation Sans, sans-serif" font-size="17.8" fill="#2a2a2a">Totali</text><rect x="1513.0" y="390.0" width="14.6" height="3.2" fill="#f5c243"/><text x="1534.5" y="397.7" font-family="Liberation Sans, sans-serif" font-size="17.8" fill="#2a2a2a">Totale Residuo</text><rect x="1669.3" y="390.0" width="14.6" height="3.2" fill="#6fcf87"/><text x="1690.8" y="397.7" font-family="Liberation Sans, sans-serif" font-size="17.8" fill="#2a2a2a">Totale Recuperato</text></svg>
<!-- cards -->
<div class="card" style="left:811px;top:731px;height:92px"><svg style="left:21.4px;top:18.6px" width="25.5" height="34" viewBox="0 0 384 512"><path fill="#c62f2d" d="M48 0H230V110Q230 154 274 154H384V464Q384 512 336 512H48Q0 512 0 464V48Q0 0 48 0Z"/><path fill="#c62f2d" d="M262 8L376 122H290Q262 122 262 94Z"/><path fill="#fff" d="M56 64h110v30H56zM56 124h110v30H56z"/><text x="192" y="440" font-size="250" font-weight="bold" text-anchor="middle" fill="#fff" font-family="Liberation Sans">$</text></svg><div class="t" style="left:69.5px;top:5.5px">Totale</div><div class="t" style="left:69.5px;top:31.3px">Affidato</div><div class="t" style="left:69.5px;top:57.1px"><b>2.273,87</b></div></div>
<div class="card" style="left:1026px;top:731px;height:92px"><svg style="left:21.4px;top:18.6px" width="25.5" height="34" viewBox="0 0 384 512"><path fill="#e2c75b" d="M48 0H230V110Q230 154 274 154H384V464Q384 512 336 512H48Q0 512 0 464V48Q0 0 48 0Z"/><path fill="#e2c75b" d="M262 8L376 122H290Q262 122 262 94Z"/><path fill="#fff" d="M176 250V352H278A102 102 0 1 1 176 250Z"/><path fill="#fff" d="M208 218A102 102 0 0 1 310 320H208Z"/></svg><div class="t" style="left:69.2px;top:5.5px">Totale</div><div class="t" style="left:69.2px;top:31.3px;letter-spacing:0.0px">Residuo</div><div class="t" style="left:69.2px;top:57.1px"><b>2.273,87</b></div></div>
<div class="card" style="left:1241px;top:731px;height:92px"><svg style="left:12.6px;top:18.6px" width="34" height="34" viewBox="0 0 512 512"><rect x="0" y="348" width="512" height="164" rx="40" fill="#6fcf87"/><rect x="62" y="408" width="388" height="26" fill="#fff"/><circle cx="256" cy="208" r="224" fill="#fff"/><circle cx="256" cy="208" r="208" fill="#6fcf87"/><text x="256" y="312" font-size="290" font-weight="bold" text-anchor="middle" fill="#fff" font-family="Liberation Sans">$</text></svg><div class="t" style="left:60.1px;top:5.5px">Totale</div><div class="t" style="left:60.1px;top:31.3px">Recuperato</div><div class="t" style="left:60.1px;top:57.1px"><b>0,00</b></div></div>
<div class="card" style="left:1456px;top:731px;height:77px"><svg style="left:23.6px;top:15.1px" width="25.5" height="26" viewBox="0 0 384 392"><circle cx="62" cy="62" r="62" fill="#e2c75b"/><circle cx="322" cy="330" r="62" fill="#e2c75b"/><path stroke="#e2c75b" stroke-width="62" stroke-linecap="round" d="M32 360L352 32"/></svg><div class="t" style="left:72.6px;top:10.4px">Stralcio</div><div class="t" style="left:72.6px;top:36.2px"><b>0,00</b></div></div>
<div class="card" style="left:1671px;top:731px;height:92px"><svg style="left:13.6px;top:18.6px" width="38.5" height="34" viewBox="0 0 576 512"><text x="288" y="235" font-size="290" font-weight="bold" text-anchor="middle" fill="#c62f2d" font-family="Liberation Sans">$</text><path fill="#c62f2d" d="M0 352h96v160H0z"/><path fill="#c62f2d" d="M96 368Q150 322 210 322H340Q380 322 380 356Q380 392 340 392H250V408H380L500 320Q540 296 566 328Q586 360 552 388L420 486Q386 512 340 512H96Z"/></svg><div class="t" style="left:66.3px;top:5.5px">Affidato</div><div class="t" style="left:66.3px;top:31.3px">Iniziale</div><div class="t" style="left:66.3px;top:57.1px"><b>0,00</b></div></div>
<div class="card" style="left:1886px;top:731px;height:77px"><svg style="left:23.6px;top:10.6px" width="25.5" height="34" viewBox="0 0 384 512"><path fill="#4b72b0" d="M24 0H360Q384 0 384 24Q384 48 360 48H24Q0 48 0 24Q0 0 24 0ZM24 464H360Q384 464 384 488Q384 512 360 512H24Q0 512 0 488Q0 464 24 464Z"/><path fill="#4b72b0" d="M32 40H352V100Q352 160 300 210L252 256L300 302Q352 352 352 412V472H32V412Q32 352 84 302L132 256L84 210Q32 160 32 100Z"/><path fill="#fff" d="M96 48H288V100Q288 120 276 138H108Q96 120 96 100ZM96 464V420Q96 380 140 340L192 296L244 340Q288 380 288 420V464Z" opacity="0"/><path fill="#fff" d="M104 150H280Q270 170 252 186L192 240L132 186Q114 170 104 150Z"/><path fill="#fff" d="M192 300L262 362Q276 376 284 392H100Q108 376 122 362Z" opacity="0"/><path fill="#fff" d="M100 464Q100 410 140 372L192 326L244 372Q284 410 284 464Z" opacity="0"/></svg><div class="t" style="left:72.5px;top:10.4px;letter-spacing:0.1px">Rata Media</div><div class="t" style="left:72.5px;top:36.2px"><b>0,00</b></div></div>
<div class="card" style="left:2101px;top:731px;height:77px"><svg style="left:19.6px;top:13.1px" width="34" height="30" viewBox="0 0 512 448"><path fill="#4b72b0" d="M64 0H448Q472 0 472 18Q472 36 448 36H76Q56 36 56 50Q56 64 76 64H448Q512 64 512 128V384Q512 448 448 448H64Q0 448 0 384V64Q0 0 64 0Z"/><path fill="#fff" d="M60 28H452V46H60z"/><circle cx="416" cy="272" r="30" fill="#fff"/></svg><div class="t" style="left:72.5px;top:10.4px;letter-spacing:0.08px">Cash Balance</div><div class="t" style="left:72.5px;top:36.2px"><b>0,00</b></div></div>
<div class="card" style="left:2316px;top:731px;height:77px"><svg style="left:21.6px;top:10.6px" width="30" height="34" viewBox="0 0 448 512"><path fill="#c62f2d" d="M96 0h64v64h128V0h64v64h48q48 0 48 48v48H0v-48q0-48 48-48h48z"/><path fill="#c62f2d" d="M0 192h448v272q0 48-48 48H48q-48 0-48-48z"/><path stroke="#fff" stroke-width="44" stroke-linecap="round" d="M160 288l128 128M288 288L160 416"/></svg><div class="t" style="left:72.5px;top:10.4px">Scaduto</div><div class="t" style="left:72.5px;top:36.2px"><b>2.273,87</b></div></div>
<div class="card" style="left:2531px;top:731px;height:77px"><svg style="left:21.6px;top:10.6px" width="30" height="34" viewBox="0 0 448 512"><path fill="#4b72b0" d="M96 0h64v64h128V0h64v64h48q48 0 48 48v48H0v-48q0-48 48-48h48z"/><path fill="#4b72b0" d="M0 192h448v272q0 48-48 48H48q-48 0-48-48z"/><rect x="64" y="256" width="128" height="128" rx="16" fill="#fff"/></svg><div class="t" style="left:72.5px;top:10.4px">A Scadere</div><div class="t" style="left:72.5px;top:36.2px"><b>0,00</b></div></div>
<div class="card r2" style="left:811px;top:841px;height:77px"><svg style="left:23.1px;top:13.5px" width="26" height="30" viewBox="0 0 26 30"><path stroke="#6fcf87" stroke-width="5.4" stroke-linecap="round" d="M13 2.7v24.6M2.6 8.8l20.8 12.4M23.4 8.8L2.6 21.2"/></svg><div class="t" style="left:72.5px;top:10.4px">Extra</div><div class="t" style="left:72.5px;top:36.2px"><b>0,00</b></div></div>
<div class="card r2" style="left:1026px;top:841px;height:77px"><svg style="left:21.6px;top:11.0px" width="30" height="34" viewBox="0 0 448 512"><path fill="#4b72b0" d="M96 0h64v64h128V0h64v64h48q48 0 48 48v48H0v-48q0-48 48-48h48z"/><path fill="#4b72b0" d="M0 192h448v272q0 48-48 48H48q-48 0-48-48z"/><rect x="112" y="330" width="224" height="44" rx="20" fill="#fff"/></svg><div class="t" style="left:72.7px;top:10.4px">Aging</div><div class="t" style="left:72.7px;top:36.2px"><b>0,00</b></div></div>
<div class="card r2" style="left:1241px;top:841px;height:92px"><svg style="left:18.6px;top:19.0px" width="30" height="34" viewBox="0 0 448 512"><path fill="#4b72b0" d="M96 0h64v64h128V0h64v64h48q48 0 48 48v48H0v-48q0-48 48-48h48z"/><path fill="#4b72b0" d="M0 192h448v272q0 48-48 48H48q-48 0-48-48z"/><rect x="64" y="272" width="320" height="120" rx="16" fill="#fff"/></svg><div class="t" style="left:66.6px;top:5.5px">Aging On</div><div class="t" style="left:66.6px;top:31.3px">Going</div><div class="t" style="left:66.6px;top:57.1px"><b>0,00</b></div></div>
<div class="card r2" style="left:1456px;top:841px;height:77px"><svg style="left:21.6px;top:11.0px" width="30" height="34" viewBox="0 0 448 512"><path fill="none" stroke="#4b72b0" stroke-width="52" d="M80 140V372M368 140V170Q368 256 280 256H170Q80 256 80 330"/><circle cx="80" cy="80" r="56" fill="#fff" stroke="#4b72b0" stroke-width="48"/><circle cx="368" cy="80" r="56" fill="#fff" stroke="#4b72b0" stroke-width="48"/><circle cx="80" cy="432" r="56" fill="#fff" stroke="#4b72b0" stroke-width="48"/></svg><div class="t" style="left:72.6px;top:10.4px">Rank</div><div class="t" style="left:72.6px;top:36.2px"><b style="letter-spacing:1.6px;display:inline-block;transform:scaleX(1.25);transform-origin:left">--</b></div></div>
<div class="card r2" style="left:1671px;top:841px;height:77px"><svg style="left:21.6px;top:11.0px" width="30" height="34" viewBox="0 0 448 512"><path fill="none" stroke="#4b72b0" stroke-width="52" d="M80 140V372M368 140V170Q368 256 280 256H170Q80 256 80 330"/><circle cx="80" cy="80" r="56" fill="#fff" stroke="#4b72b0" stroke-width="48"/><circle cx="368" cy="80" r="56" fill="#fff" stroke="#4b72b0" stroke-width="48"/><circle cx="80" cy="432" r="56" fill="#fff" stroke="#4b72b0" stroke-width="48"/></svg><div class="t" style="left:72.3px;top:10.4px;letter-spacing:-.05px">Classe Rank</div><div class="t" style="left:72.3px;top:36.2px"><b>D</b></div></div>
<div class="card r2" style="left:1886px;top:841px;height:92px"><svg style="left:9.6px;top:19.0px" width="30" height="34" viewBox="0 0 448 512"><path fill="none" stroke="#4b72b0" stroke-width="52" d="M80 140V372M368 140V170Q368 256 280 256H170Q80 256 80 330"/><circle cx="80" cy="80" r="56" fill="#fff" stroke="#4b72b0" stroke-width="48"/><circle cx="368" cy="80" r="56" fill="#fff" stroke="#4b72b0" stroke-width="48"/><circle cx="80" cy="432" r="56" fill="#fff" stroke="#4b72b0" stroke-width="48"/></svg><div class="t" style="left:48.3px;top:5.5px">Descrizione</div><div class="t" style="left:48.3px;top:31.3px;letter-spacing:-.05px">Classe Rank</div><div class="t" style="left:48.3px;top:57.1px"><b style="letter-spacing:1.6px;display:inline-block;transform:scaleX(1.25);transform-origin:left">--</b></div></div>
<!-- table -->
<div class="stitle" style="left:811px;top:963.2px;letter-spacing:.44px">Ripartizione per conto</div><div class="sline" style="left:811px;top:985.5px;width:1997px"></div>
<div class="td h" style="left:820.3px;top:1009.2px">Codice</div>
<div class="td h" style="left:1113.0px;top:1009.2px">Descrizione</div>
<div class="td h" style="left:1603.5px;top:1009.2px">Tipo Conto</div>
<div class="td r h" style="right:672.6px;top:1009.2px">Affidato</div>
<div class="td r h" style="right:331.5px;top:1009.2px">Recuperato</div>
<div class="td r h" style="right:58.2px;top:1009.2px">Residuo</div>
<div class="td a" style="left:820.3px;top:1050.4px;letter-spacing:-.28px">12100001</div>
<div class="td " style="left:1113.0px;top:1050.4px;letter-spacing:0.42px">Capitale ceduto</div>
<div class="td " style="left:1603.5px;top:1050.4px">Principal</div>
<div class="td r " style="right:672.6px;top:1050.4px">835,78</div>
<div class="td r " style="right:331.5px;top:1050.4px">0,00</div>
<div class="td r " style="right:58.2px;top:1050.4px">835,78</div>
<div class="td a" style="left:820.3px;top:1096.1px;letter-spacing:0.6px">12300002</div>
<div class="td " style="left:1113.0px;top:1096.1px;letter-spacing:0.17px">Interessi Company</div>
<div class="td " style="left:1603.5px;top:1096.1px">Interest</div>
<div class="td r " style="right:672.6px;top:1096.1px">896,59</div>
<div class="td r " style="right:331.5px;top:1096.1px">0,00</div>
<div class="td r " style="right:58.2px;top:1096.1px">896,59</div>
<div class="td a" style="left:820.3px;top:1142.1px;letter-spacing:0.6px">12300003</div>
<div class="td " style="left:1113.0px;top:1142.1px;letter-spacing:0.05px">Spese Company</div>
<div class="td " style="left:1603.5px;top:1142.1px">Expense</div>
<div class="td r " style="right:672.6px;top:1142.1px">541,50</div>
<div class="td r " style="right:331.5px;top:1142.1px">0,00</div>
<div class="td r " style="right:58.2px;top:1142.1px">541,50</div>
<div class="td h" style="left:820.3px;top:1188.1px">Totali</div>
<div class="td r h" style="right:672.6px;top:1188.1px;letter-spacing:1.2px">2.273,87</div>
<div class="td r h" style="right:331.5px;top:1188.1px;letter-spacing:1.2px">0,00</div>
<div class="td r h" style="right:58.2px;top:1188.1px;letter-spacing:1.2px">2.273,87</div>
<div class="tr" style="top:1036.3px"></div>
<div class="tr" style="top:1082px"></div>
<div class="tr" style="top:1128px"></div>
<div class="tr" style="top:1174px"></div>
<div class="tr" style="top:1220px"></div>
</body>
</html>
